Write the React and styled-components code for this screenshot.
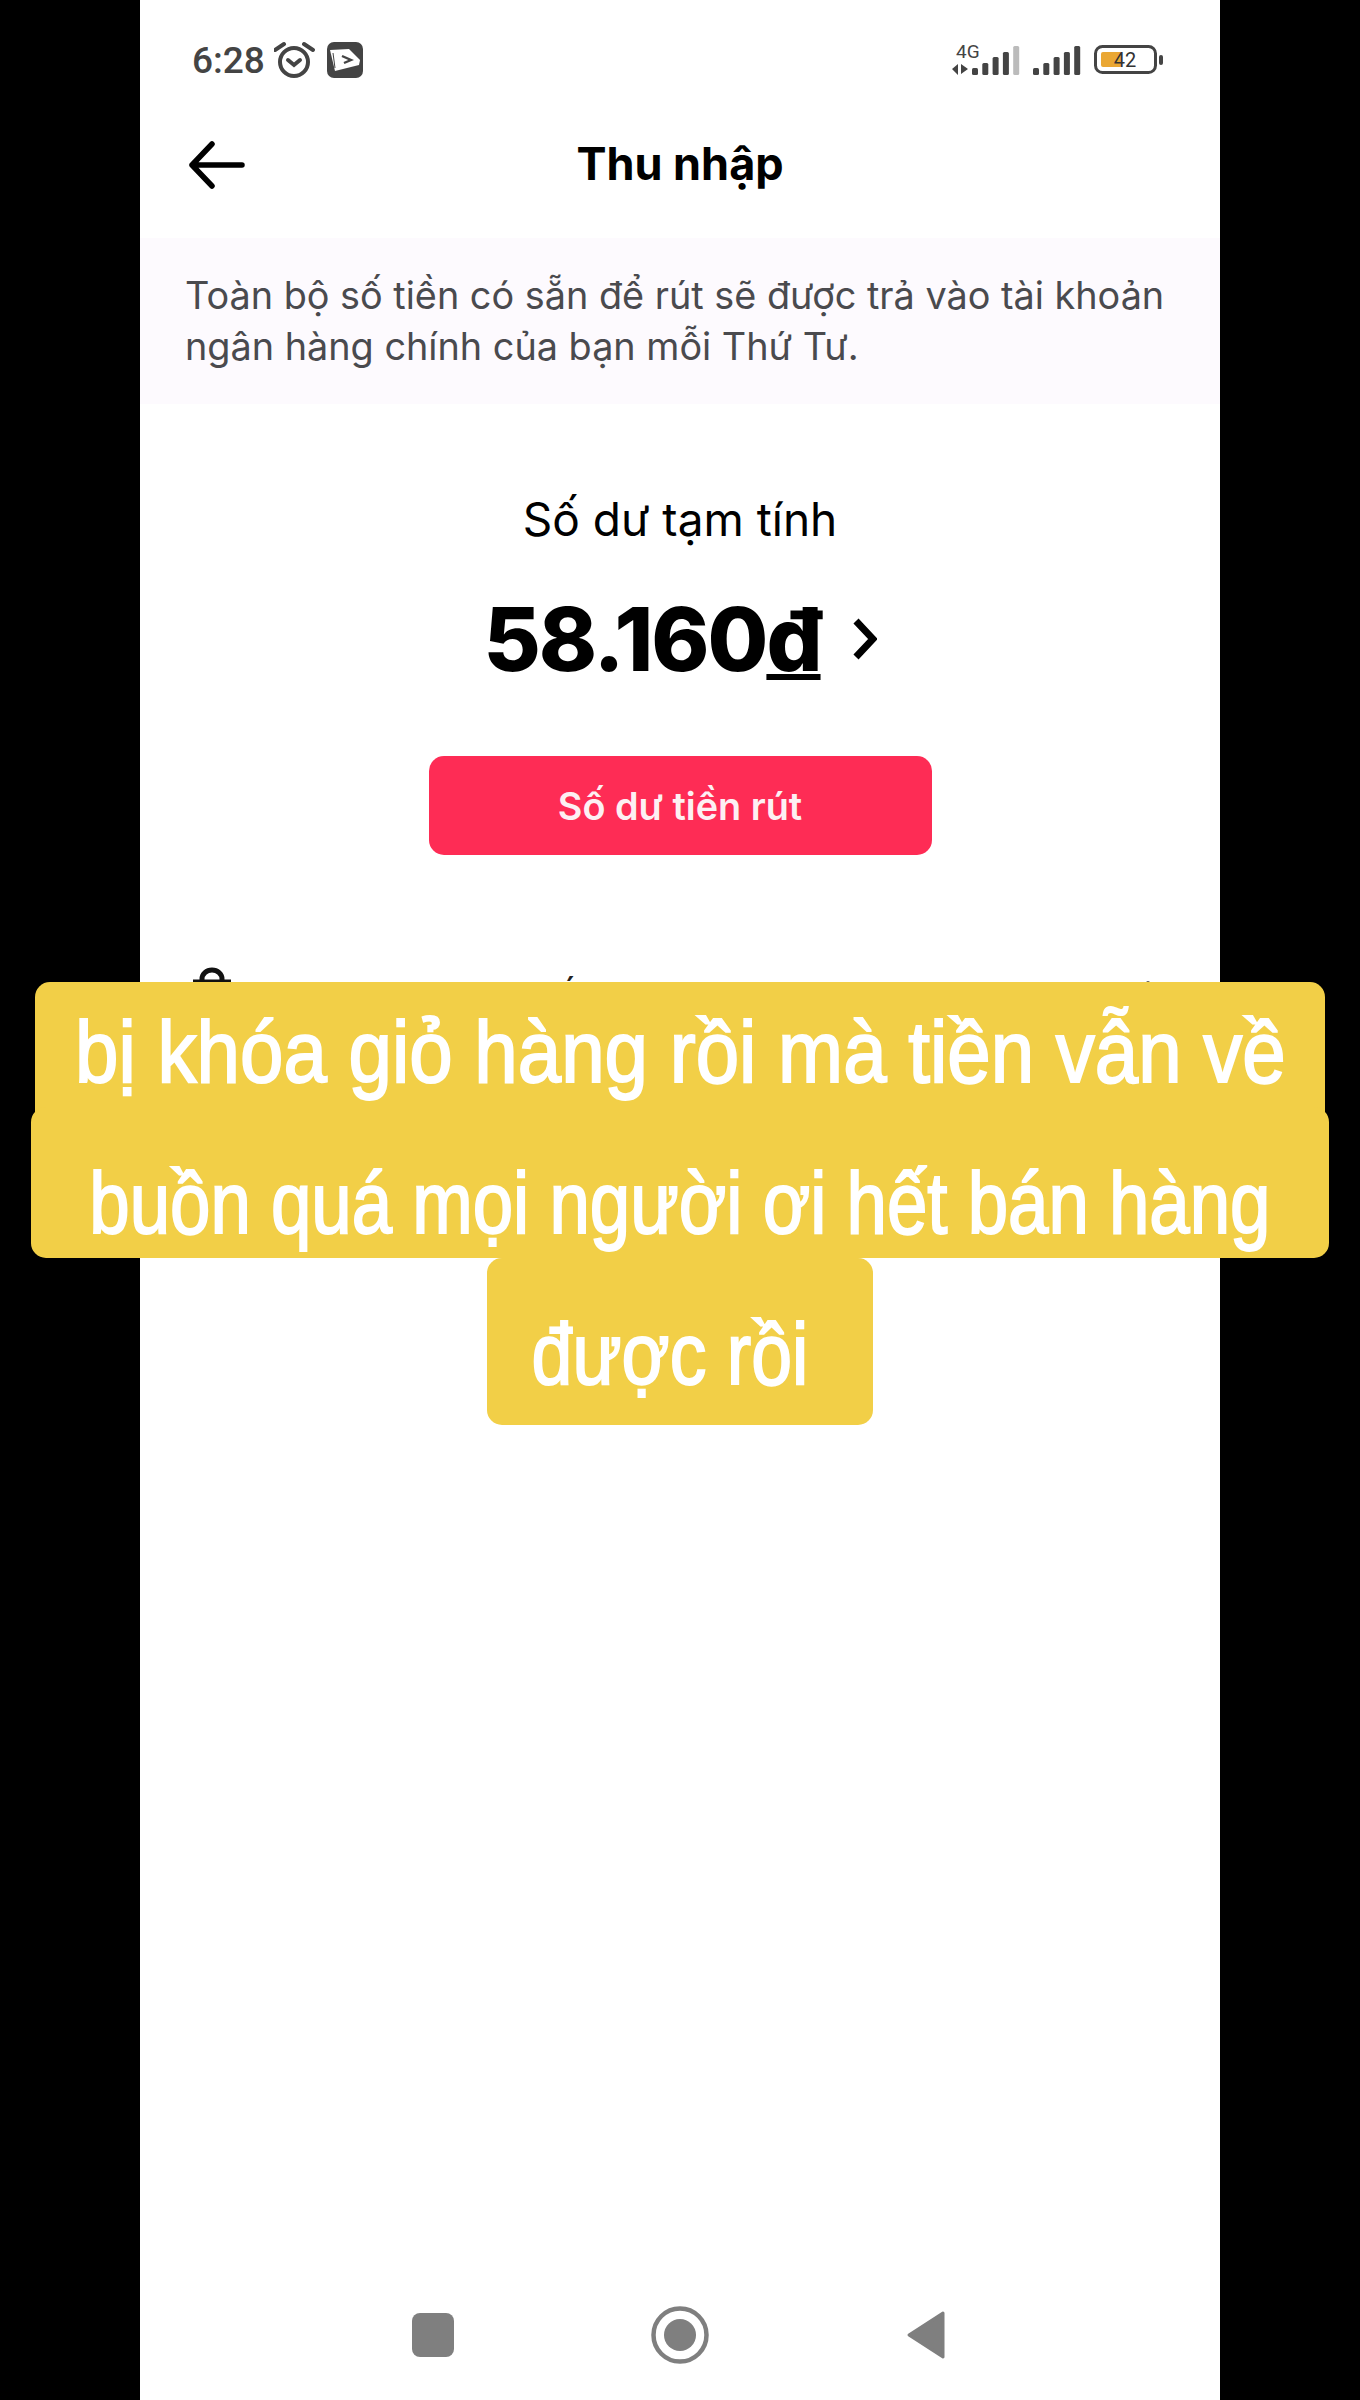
import React from 'react';
import styled, { createGlobalStyle } from 'styled-components';

const GlobalStyle = createGlobalStyle`
  html, body {
    margin: 0;
    padding: 0;
    background: #000;
  }
  body {
    font-family: Inter, "Liberation Sans", sans-serif;
  }
`;

const Stage = styled.div`
  position: relative;
  width: 1360px;
  height: 2400px;
  background: #000;
  overflow: hidden;
`;

const Phone = styled.main`
  width: 1080px;
  height: 2400px;
  margin: 0 auto;
  background: #fff;
  display: flex;
  flex-direction: column;
`;

const StatusBar = styled.div`
  height: 56px;
  padding: 32px 56px 0 52px;
  display: flex;
  align-items: center;
  justify-content: space-between;
  color: #444;
`;

const StatusGroup = styled.div`
  display: flex;
  align-items: center;
  gap: ${(p) => p.$gap || 0}px;
`;

const Clock = styled.span`
  font-family: Roboto, sans-serif;
  font-size: 37px;
  font-weight: 500;
  line-height: 1;
`;

const Header = styled.header`
  height: 150px;
  display: flex;
  align-items: center;
  justify-content: center;
  position: relative;
`;

const BackButton = styled.div`
  position: absolute;
  left: 49px;
  top: 53px;
  display: flex;
`;

const Title = styled.h1`
  margin: 0;
  font-family: Inter, sans-serif;
  font-size: 45px;
  font-weight: 700;
  color: #000;
`;

const Notice = styled.div`
  height: 166px;
  padding: 32px 45px 0;
  box-sizing: border-box;
  background: #fdfafe;
  color: #4a4a4e;
  font-family: Inter, sans-serif;
  font-size: 37.8px;
  line-height: 51px;
`;

const Balance = styled.section`
  padding-top: 87px;
  display: flex;
  flex-direction: column;
  align-items: center;
`;

const BalanceLabel = styled.div`
  font-family: Inter, sans-serif;
  font-size: 46px;
  line-height: 56px;
  color: #000;
`;

const AmountRow = styled.div`
  margin-top: 42px;
  display: flex;
  align-items: center;
  gap: 32px;
  color: #000;
`;

const Amount = styled.div`
  font-family: Inter, sans-serif;
  font-size: 88px;
  line-height: 100px;
  font-weight: 800;
  letter-spacing: -2px;
`;

const Currency = styled.span`
  text-decoration: underline;
  text-decoration-thickness: 6px;
  text-underline-offset: 3px;
`;

const WithdrawButton = styled.div`
  margin-top: 67px;
  width: 503px;
  height: 99px;
  border-radius: 15px;
  background: #fe2c55;
  color: #fdf0f3;
  font-family: Inter, sans-serif;
  font-size: 37.8px;
  font-weight: 600;
  display: flex;
  align-items: center;
  justify-content: center;
`;

const LinkRow = styled.div`
  margin-top: 112px;
  padding: 0 56px 0 53px;
  display: flex;
  align-items: center;
  gap: 45px;
  font-family: Inter, sans-serif;
  font-size: 38px;
  color: #222;
`;

const LinkLabel = styled.span`
  flex: 1;
`;

const NavBar = styled.nav`
  margin-top: auto;
  margin-bottom: 36px;
  height: 58px;
  padding: 0 274px 0 272px;
  display: flex;
  align-items: center;
  justify-content: space-between;
`;

const Caption = styled.div`
  position: absolute;
  top: 982px;
  left: 0;
  width: 1360px;
  display: flex;
  flex-direction: column;
  align-items: center;
`;

const CaptionLine = styled.div`
  box-sizing: border-box;
  width: ${(p) => p.$width}px;
  height: ${(p) => p.$height}px;
  padding-top: ${(p) => p.$pad}px;
  margin-bottom: ${(p) => p.$overlap || 0}px;
  border-radius: 15px;
  background: #f2cf47;
  color: #fff;
  display: flex;
  justify-content: center;
`;

const CaptionText = styled.span`
  display: block;
  flex: none;
  font-family: "Liberation Sans", sans-serif;
  font-size: 88px;
  line-height: 100px;
  white-space: pre;
  -webkit-text-stroke: 2px #fff;
  transform: scaleX(${(p) => p.$squeeze});
`;

const BackIcon = () => (
  <svg width="56" height="48" viewBox="0 0 56 48" fill="none" stroke="#000" strokeWidth="5.5" strokeLinecap="round" strokeLinejoin="round">
    <path d="M3 24h50M23 3 3 24l20 21" />
  </svg>
);

const AlarmIcon = () => (
  <svg width="44" height="38" viewBox="0 0 44 38" fill="none" stroke="#444" strokeWidth="4">
    <circle cx="20" cy="21" r="14" />
    <path d="m14 19 6 5 6-5" strokeLinecap="round" />
    <path d="M1 9l9-6M39 9l-9-6" strokeLinecap="round" />
  </svg>
);

const AppIcon = () => (
  <svg width="36" height="36" viewBox="0 0 36 36">
    <rect width="36" height="36" rx="7" fill="#444" />
    <path d="M3 8 22 7l11 11-1 5-24 6z" fill="#fff" />
    <path d="M6 11 8 26" stroke="#444" strokeWidth="1" />
    <path d="m15 14 9 4-7 3" fill="none" stroke="#444" strokeWidth="2.4" />
  </svg>
);

const barHeights = [7, 12, 18, 23, 29];

const SignalIcon = ({ roaming }) => {
  const start = roaming ? 20 : 0;
  return (
    <svg width={start + 48} height="32" viewBox={`0 0 ${start + 48} 32`}>
      {roaming && (
        <>
          <text x="4" y="14" fontSize="19" fontFamily="Roboto, sans-serif" fill="#444">4G</text>
          <path d="M0 25l6-5v11zM9 20l7 5-7 5z" fill="#444" />
        </>
      )}
      {barHeights.map((h, i) => (
        <rect
          key={h}
          x={start + i * 10.3}
          y={31 - h}
          width="6"
          height={h}
          rx="1.5"
          fill={roaming && i === 4 ? '#bbb' : '#444'}
        />
      ))}
    </svg>
  );
};

const BatteryIcon = () => (
  <svg width="70" height="32" viewBox="0 0 70 32">
    <rect x="1.5" y="2.5" width="60" height="26" rx="7" fill="none" stroke="#444" strokeWidth="3" />
    <rect x="7" y="8" width="21" height="15" rx="2" fill="#eaa733" />
    <rect x="65" y="11" width="4" height="10" rx="2" fill="#444" />
    <text x="31" y="23" textAnchor="middle" fontSize="20" fontFamily="Roboto, sans-serif" fill="#333">42</text>
  </svg>
);

const AmountChevron = () => (
  <svg width="24" height="42" viewBox="0 0 24 42" fill="none" stroke="#000" strokeWidth="7" strokeLinejoin="miter">
    <path d="m3 3 17 18L3 39" />
  </svg>
);

const RowChevron = () => (
  <svg width="18" height="32" viewBox="0 0 18 32" fill="none" stroke="#666" strokeWidth="4" strokeLinecap="round">
    <path d="m2 2 14 14L2 30" />
  </svg>
);

const BagIcon = () => (
  <svg width="38" height="60" viewBox="0 0 38 60" fill="none" stroke="#111" strokeWidth="5">
    <path d="M0 15h38M3 15v42h32V15M9 15v-3a10 9 0 0 1 20 0v3" />
  </svg>
);

const SquareIcon = () => (
  <svg width="42" height="44" viewBox="0 0 42 44">
    <rect width="42" height="44" rx="8" fill="#7f7f7f" />
  </svg>
);

const HomeIcon = () => (
  <svg width="58" height="58" viewBox="0 0 58 58">
    <circle cx="29" cy="29" r="26.5" fill="none" stroke="#7f7f7f" strokeWidth="4.5" />
    <circle cx="29" cy="29" r="16" fill="#7f7f7f" />
  </svg>
);

const TriangleIcon = () => (
  <svg width="40" height="50" viewBox="0 0 40 50">
    <path d="M37 3 3 25l34 22z" fill="#7f7f7f" stroke="#7f7f7f" strokeWidth="3" strokeLinejoin="round" />
  </svg>
);

export default function App() {
  return (
    <Stage>
      <GlobalStyle />
      <Phone>
        <StatusBar>
          <StatusGroup $gap={9}>
            <Clock>6:28</Clock>
            <AlarmIcon />
            <AppIcon />
          </StatusGroup>
          <StatusGroup $gap={13}>
            <SignalIcon roaming />
            <SignalIcon />
            <BatteryIcon />
          </StatusGroup>
        </StatusBar>
        <Header>
          <BackButton>
            <BackIcon />
          </BackButton>
          <Title>Thu nhập</Title>
        </Header>
        <Notice>
          Toàn bộ số tiền có sẵn để rút sẽ được trả vào tài khoản
          <br />
          ngân hàng chính của bạn mỗi Thứ Tư.
        </Notice>
        <Balance>
          <BalanceLabel>Số dư tạm tính</BalanceLabel>
          <AmountRow>
            <Amount>
              58.160<Currency>đ</Currency>
            </Amount>
            <AmountChevron />
          </AmountRow>
          <WithdrawButton>Số dư tiền rút</WithdrawButton>
        </Balance>
        <LinkRow>
          <BagIcon />
          <LinkLabel>Đơn hàng liên kết</LinkLabel>
          <RowChevron />
        </LinkRow>
        <NavBar>
          <SquareIcon />
          <HomeIcon />
          <TriangleIcon />
        </NavBar>
      </Phone>
      <Caption>
        <CaptionLine $width={1290} $height={150} $pad={20} $overlap={-25}>
          <CaptionText $squeeze={0.887}>bị khóa giỏ hàng rồi mà tiền vẫn về</CaptionText>
        </CaptionLine>
        <CaptionLine $width={1298} $height={151} $pad={46}>
          <CaptionText $squeeze={0.825}>buồn quá mọi người ơi hết bán hàng</CaptionText>
        </CaptionLine>
        <CaptionLine $width={386} $height={167} $pad={46}>
          <CaptionText $squeeze={0.834}>được rồi </CaptionText>
        </CaptionLine>
      </Caption>
    </Stage>
  );
}
